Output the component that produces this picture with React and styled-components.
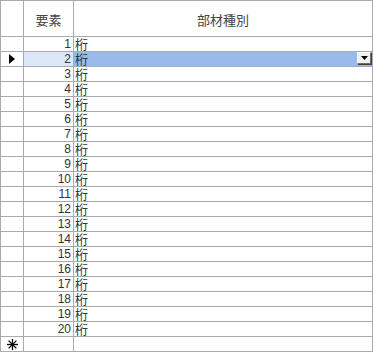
import React from "react";
import styled, { createGlobalStyle } from "styled-components";

const Global = createGlobalStyle`
  html, body { margin: 0; padding: 0; background: #ffffff; }
  body { font-family: "Noto Sans CJK JP", "Noto Sans", sans-serif; }
`;

const Sheet = styled.div`
  display: grid;
  grid-template-columns: 22px 49px 298px;
  grid-template-rows: 35px repeat(21, 14px);
  gap: 1px;
  padding: 1px;
  width: max-content;
  background: #a7abb0;
`;

const Head = styled.div`
  background: #ffffff;
  color: #444444;
  font-size: 13px;
  display: flex;
  align-items: center;
  justify-content: center;
  padding-top: 1px;
`;

const Selector = styled.div`
  background: #ffffff;
  display: flex;
  align-items: center;
  justify-content: flex-start;
  padding-left: ${(p) => (p.$star ? 6 : 8)}px;
`;

const NumCell = styled.div`
  background: ${(p) => (p.$active ? "#dce7fa" : "#ffffff")};
  color: #333333;
  font-family: "Liberation Sans", Arial, sans-serif;
  font-size: 12px;
  line-height: 14px;
  text-align: right;
  padding-right: 2px;
`;

const KindCell = styled.div`
  background: ${(p) => (p.$active ? "#99bbec" : "#ffffff")};
  color: #333333;
  font-size: 13px;
  line-height: 14px;
  padding-left: 1px;
  display: flex;
  align-items: center;
`;

const KindText = styled.span`
  flex: 1;
`;

const DropButton = styled.div`
  width: 12px;
  height: 10px;
  margin-right: 1px;
  align-self: flex-start;
  background: #f0f0f0;
  border-top: 1px solid #ffffff;
  border-left: 1px solid #ffffff;
  border-right: 1px solid #6e6e6e;
  border-bottom: 1px solid #6e6e6e;
  box-shadow: 1px 1px 0 #404040;
  display: flex;
  align-items: center;
  justify-content: center;
`;

const Pointer = () => (
  <svg width="6" height="10" viewBox="0 0 6 10">
    <path d="M0 0 L6 5 L0 10 Z" fill="#000" />
  </svg>
);

const Star = () => (
  <svg width="11" height="11" viewBox="0 0 11 11">
    <g stroke="#000" strokeWidth="1.3">
      <line x1="5.5" y1="0" x2="5.5" y2="11" />
      <line x1="0" y1="5.5" x2="11" y2="5.5" />
      <line x1="1.6" y1="1.6" x2="9.4" y2="9.4" />
      <line x1="9.4" y1="1.6" x2="1.6" y2="9.4" />
    </g>
  </svg>
);

const DownArrow = () => (
  <svg width="7" height="4" viewBox="0 0 7 4">
    <path d="M0 0 L7 0 L3.5 4 Z" fill="#000" />
  </svg>
);

const rows = Array.from({ length: 20 }, (_, i) => ({ id: i + 1, kind: "桁" }));
const activeId = 2;

export default function App() {
  return (
    <>
      <Global />
      <Sheet>
        <Head />
        <Head>要素</Head>
        <Head>部材種別</Head>
        {rows.map((r) => {
          const active = r.id === activeId;
          return (
            <React.Fragment key={r.id}>
              <Selector>{active && <Pointer />}</Selector>
              <NumCell $active={active}>{r.id}</NumCell>
              <KindCell $active={active}>
                <KindText>{r.kind}</KindText>
                {active && (
                  <DropButton>
                    <DownArrow />
                  </DropButton>
                )}
              </KindCell>
            </React.Fragment>
          );
        })}
        <Selector $star>
          <Star />
        </Selector>
        <NumCell />
        <KindCell />
      </Sheet>
    </>
  );
}
